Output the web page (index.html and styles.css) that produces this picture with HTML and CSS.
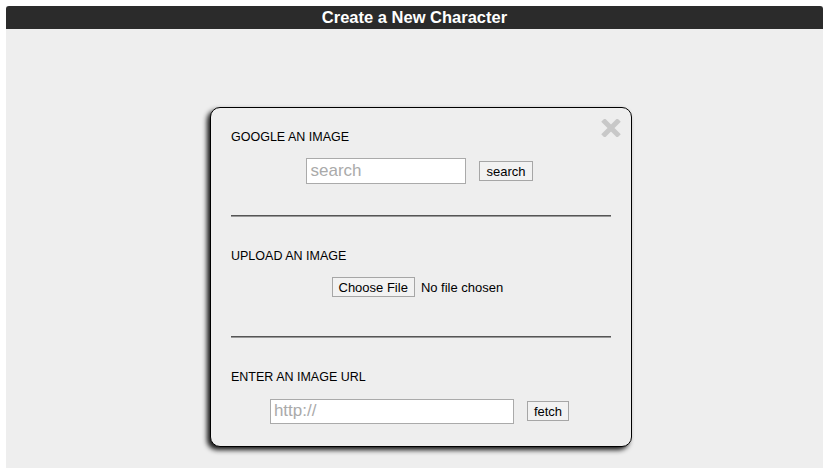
FILE: index.html
```html
<!DOCTYPE html>
<html lang="en">
<head>
    <meta charset="UTF-8">
    <meta name="viewport" content="width=device-width, initial-scale=1.0">
    <title>Create a New Character</title>
    <link rel="stylesheet" href="styles.css">
</head>
<body>

    <div class="panel">
        <div class="panel-header">Create a New Character</div>

        <div class="panel-body">
            <!-- Image picker dialog -->
            <div class="dialog">
                <button class="close-btn" title="Close">
                    <svg width="20" height="18" viewBox="0 0 20 18">
                        <path d="M2 1 L18 17 M18 1 L2 17" stroke="#c8c8c8" stroke-width="5" fill="none"/>
                    </svg>
                </button>

                <div class="section">
                    <div class="section-title">GOOGLE AN IMAGE</div>
                    <div class="row">
                        <input type="text" class="search-input" placeholder="search">
                        <button class="small-btn">search</button>
                    </div>
                </div>

                <hr>

                <div class="section">
                    <div class="section-title">UPLOAD AN IMAGE</div>
                    <div class="row file-row">
                        <input type="file" class="file-input">
                    </div>
                </div>

                <hr>

                <div class="section">
                    <div class="section-title">ENTER AN IMAGE URL</div>
                    <div class="row">
                        <input type="text" class="url-input" placeholder="http://">
                        <button class="small-btn">fetch</button>
                    </div>
                </div>
            </div>
        </div>
    </div>

</body>
</html>
```

FILE: styles.css
```css
body {
    font-family: "Liberation Sans", Arial, sans-serif;
    background-color: #fff;
    margin: 0;
    padding: 0;
}

.panel {
    margin: 6px 3px 0 6px;
    height: calc(100vh - 6px);
    background-color: #eeeeee;
    display: flex;
    flex-direction: column;
}

.panel-header {
    height: 23px;
    line-height: 23px;
    background-color: #2b2b2b;
    color: #fff;
    text-align: center;
    font-size: 16.5px;
    font-weight: bold;
    border-radius: 3px 3px 0 0;
}

.panel-body {
    flex: 1;
    display: flex;
    align-items: flex-start;
}

.dialog {
    position: relative;
    width: 380px;
    margin: 78px 0 0 204px;
    padding: 22px 20px 22px;
    background-color: #eeeeee;
    border: 1px solid #000;
    border-radius: 10px;
    box-shadow: -3px 3px 5px rgba(0, 0, 0, 0.9);
}

.close-btn {
    position: absolute;
    top: 11px;
    right: 10px;
    padding: 0;
    border: none;
    background: none;
    cursor: pointer;
    line-height: 0;
}

.section-title {
    font-size: 12.5px;
    line-height: 14px;
    color: #000;
    margin-bottom: 14px;
}

.row {
    display: flex;
    justify-content: center;
    align-items: center;
    gap: 13px;
    height: 26px;
    padding-right: 3px;
}

.file-row {
    height: 28px;
    align-items: flex-start;
}

hr {
    margin: 31px 0 32px;
    height: 0;
    border: none;
    border-top: 1px solid #555;
    border-bottom: 1px solid #999;
}

input[type="text"] {
    box-sizing: border-box;
    height: 26px;
    padding: 0 3px;
    border: 1px solid #aaaaaa;
    background-color: #fff;
    font-family: "Liberation Sans", Arial, sans-serif;
    font-size: 17px;
    outline: none;
}

input::placeholder {
    color: #aaaaaa;
}

.search-input {
    width: 160px;
}

.url-input {
    width: 244px;
    height: 25px !important;
}

.small-btn,
.file-input::file-selector-button {
    box-sizing: border-box;
    height: 20px;
    padding: 0 6px;
    border: 1px solid #a6a6a6;
    border-radius: 0;
    background-color: #f2f2f2;
    color: #000;
    font-family: "Liberation Sans", Arial, sans-serif;
    font-size: 13px;
    cursor: pointer;
}

.file-input {
    width: 176px;
    font-family: "Liberation Sans", Arial, sans-serif;
    font-size: 13px;
    color: #000;
}

.file-input::file-selector-button {
    margin-right: 6px;
}
```
